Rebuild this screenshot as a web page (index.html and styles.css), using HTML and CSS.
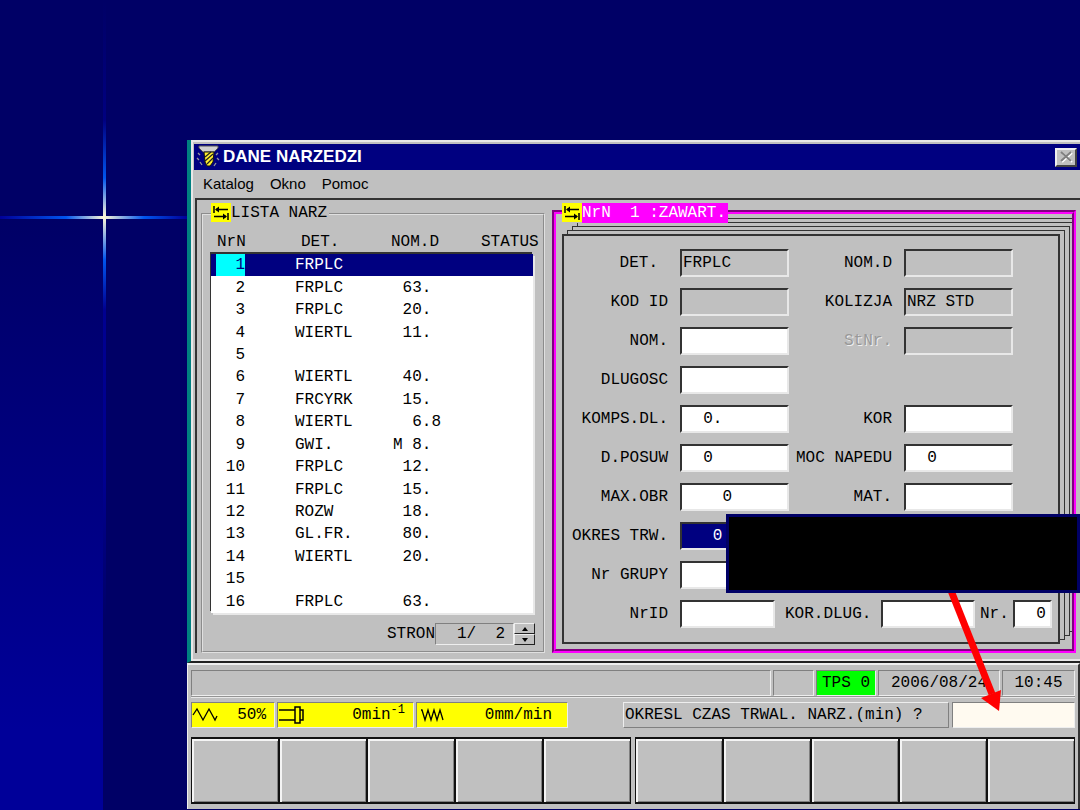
FILE: index.html
```html
<!DOCTYPE html>
<html lang="pl">
<head>
<meta charset="utf-8">
<title>DANE NARZEDZI</title>
<link rel="stylesheet" href="styles.css">
</head>
<body>
<div class="slide">
  <div class="ray ray-v"></div>
  <div class="ray ray-h"></div>

  <main class="screen">
    <section class="window">
      <header class="titlebar">
        <svg class="drill" viewBox="0 0 24 24" width="24" height="24" aria-hidden="true">
          <path d="M3 1h19v2l-4 4H7L3 3z" fill="#d0d0d0" stroke="#555" stroke-width="1"/>
          <path d="M8 7h10l-1 10-3 4h-3l-2-4z" fill="#ffee30" stroke="#111" stroke-width="1"/>
          <path d="M9 12l6-5M9 16l8-7M11 19l6-6" stroke="#222" stroke-width="1.2" fill="none"/>
          <path d="M2 8l2 2M1 13l2 2M4 17l2 3M22 8l-2 2M21 13l2 2M20 18l-2 3" stroke="#999" stroke-width="1.3"/>
        </svg>
        <h1>DANE NARZEDZI</h1>
        <button class="close" aria-label="Zamknij">
          <svg viewBox="0 0 14 14" width="14" height="14"><path d="M3 3l10 9M13 3L3 12" stroke="#fff" stroke-width="2"/><path d="M2 2l10 9M12 2L2 11" stroke="#808080" stroke-width="2"/></svg>
        </button>
      </header>
      <nav class="menu">
        <button>Katalog</button><button>Okno</button><button>Pomoc</button>
      </nav>

      <div class="work">
        <section class="group">
          <h2 class="legend"><svg class="tab" viewBox="0 0 20 19" width="20" height="19"><path d="M3 3v7M5 6.500h12M3 13.500h12M17 10v7" stroke="#000" stroke-width="1.5"/><path d="M4 6.500l4-3v6zM16 13.500l-4-3v6z"/></svg><span>LISTA NARZ</span></h2>
          <table class="tools">
            <thead><tr><th>NrN</th><th>DET.</th><th>NOM.D</th><th>STATUS</th></tr></thead>
            <tbody>
              <tr class="sel"><td><span>1</span></td><td>FRPLC</td><td></td><td></td></tr>
              <tr><td>2</td><td>FRPLC</td><td>63. </td><td></td></tr>
              <tr><td>3</td><td>FRPLC</td><td>20. </td><td></td></tr>
              <tr><td>4</td><td>WIERTL</td><td>11. </td><td></td></tr>
              <tr><td>5</td><td></td><td></td><td></td></tr>
              <tr><td>6</td><td>WIERTL</td><td>40. </td><td></td></tr>
              <tr><td>7</td><td>FRCYRK</td><td>15. </td><td></td></tr>
              <tr><td>8</td><td>WIERTL</td><td>6.8</td><td></td></tr>
              <tr><td>9</td><td>GWI.</td><td>M 8. </td><td></td></tr>
              <tr><td>10</td><td>FRPLC</td><td>12. </td><td></td></tr>
              <tr><td>11</td><td>FRPLC</td><td>15. </td><td></td></tr>
              <tr><td>12</td><td>ROZW</td><td>18. </td><td></td></tr>
              <tr><td>13</td><td>GL.FR.</td><td>80. </td><td></td></tr>
              <tr><td>14</td><td>WIERTL</td><td>20. </td><td></td></tr>
              <tr><td>15</td><td></td><td></td><td></td></tr>
              <tr><td>16</td><td>FRPLC</td><td>63. </td><td></td></tr>
            </tbody>
          </table>
          <div class="pager">
            <span>STRON</span><output class="page">1/  2</output>
            <div class="spin">
              <button aria-label="Poprzednia strona"><svg viewBox="0 0 8 4" width="8" height="4"><path d="M4 0l3 4H1z"/></svg></button>
              <button aria-label="Nastepna strona"><svg viewBox="0 0 8 4" width="8" height="4"><path d="M4 4l3-4H1z"/></svg></button>
            </div>
          </div>
        </section>

        <section class="detail">
          <h2 class="legend active"><svg class="tab" viewBox="0 0 20 19" width="20" height="19"><path d="M3 3v7M5 6.500h12M3 13.500h12M17 10v7" stroke="#000" stroke-width="1.5"/><path d="M4 6.500l4-3v6zM16 13.500l-4-3v6z"/></svg><span>NrN  1 :ZAWART.</span></h2>
          <div class="detail-in">
            <form class="sheet">
              <div class="fields">
                <label class="short" for="det">DET.</label><input id="det" class="ro" readonly value="FRPLC">
                <label for="nomd">NOM.D</label><input id="nomd" class="ro" readonly>
                <label for="kod">KOD ID</label><input id="kod" class="ro" readonly>
                <label for="kol">KOLIZJA</label><input id="kol" class="ro" readonly value="NRZ STD">
                <label for="nom">NOM.</label><input id="nom">
                <label class="off" for="stnr">StNr.</label><input id="stnr" class="ro" disabled>
                <label for="dl">DLUGOSC</label><input id="dl">
                <label class="first" for="komp">KOMPS.DL.</label><input id="komp" value="  0.">
                <label for="kor">KOR</label><input id="kor">
                <label for="pos">D.POSUW</label><input id="pos" value="  0">
                <label for="moc">MOC NAPEDU</label><input id="moc" value="  0">
                <label for="obr">MAX.OBR</label><input id="obr" value="    0">
                <label for="mat">MAT.</label><input id="mat">
                <label for="okr">OKRES TRW.</label><input id="okr" class="hot" value="   0">
                <label class="first" for="grp">Nr GRUPY</label><input id="grp">
              </div>
              <div class="last">
                <label for="nrid">NrID</label><input id="nrid">
                <label for="kdl">KOR.DLUG.</label><input id="kdl">
                <label for="nr">Nr.</label><input id="nr" value="  0">
              </div>
            </form>
          </div>
        </section>
      </div>
    </section>

    <section class="console">
      <div class="status">
        <span class="cell"></span><span class="cell"></span><span class="cell tps">TPS 0</span><span class="cell">2006/08/24</span><span class="cell">10:45</span>
      </div>
      <div class="readout">
        <span class="cell feed"><svg viewBox="0 0 26 16" width="26" height="16"><path d="M1 8l4-6 6 11 6-11 6 11 2-4" fill="none" stroke="#000" stroke-width="1.3"/></svg>50%</span>
        <span class="cell feed"><svg viewBox="0 0 26 20" width="26" height="20"><path d="M1 5h16M1 15h16M17 2h5v16h-5zM22 5h3v10h-3" fill="none" stroke="#000" stroke-width="1.5"/></svg><span>0min<sup>-1</sup></span></span>
        <span class="cell feed"><svg viewBox="0 0 24 16" width="24" height="16"><path d="M1 3h1l3 10 3-10 3 10 3-10 3 10 3-10 3 10" fill="none" stroke="#000" stroke-width="1.3"/></svg>0mm/min</span>
        <label class="prompt" for="ans">OKRESL CZAS TRWAL. NARZ.(min) ?</label>
        <input id="ans" class="answer">
      </div>
      <div class="keys">
        <div class="bank"><button aria-label="F1"></button><button aria-label="F2"></button><button aria-label="F3"></button><button aria-label="F4"></button><button aria-label="F5"></button></div>
        <div class="bank"><button aria-label="F6"></button><button aria-label="F7"></button><button aria-label="F8"></button><button aria-label="F9"></button><button aria-label="F10"></button></div>
      </div>
    </section>

    <svg class="arrow" viewBox="0 0 70 130" width="70" height="130" aria-hidden="true"><path d="M12 6L54 112" stroke="#f00" stroke-width="7"/><path d="M61 129L43 116L63 108z" fill="#f00"/></svg>
    <div class="callout"></div>
  </main>
</div>
</body>
</html>
```

FILE: styles.css
```css
* { box-sizing: border-box; }

body {
  margin: 0;
  font: 16px/20px "Liberation Mono", monospace;
  color: #000;
}

button, input {
  font: inherit;
  color: inherit;
  padding: 0;
  border-radius: 0;
}

h1, h2 { margin: 0; font-size: 16px; font-weight: 400; }

.slide {
  position: relative;
  min-height: 100vh;
  padding: 140px 0 0 187px;
  overflow: hidden;
  background: #000066 linear-gradient(180deg, #000066 0%, #000066 27%, #000099 90%) 0 0 / 104px 100% no-repeat;
}

/* Star-shaped light rays */
.ray { position: absolute; }
.ray-v {
  left: 103px; top: 0; bottom: 0; width: 3px;
  background: linear-gradient(180deg, #000066 0, #000080 120px, #0055ee 178px, #fff8d8 217px, #0055ee 260px, #000090 310px, #000090 480px, #000066 620px);
}
.ray-h {
  left: 0; top: 216px; width: 187px; height: 3px;
  background: linear-gradient(90deg, #000099 0, #0055ee 66px, #fff8d8 104px, #0055ee 144px, #000099 187px);
}

.screen { position: relative; }

.window {
  padding: 2px 0 8px 3px;
  background: #c0c0c0;
  border-left: 4px solid #008080;
  border-bottom: 2px solid #222;
  box-shadow: inset 2px 2px #e8e8e8, inset 0 -2px #e8e8e8;
}

.titlebar {
  display: flex;
  align-items: center;
  height: 26px;
  margin-top: 2px;
  padding: 0 3px 0 2px;
  background: #000080;
  color: #fff;
}
.titlebar h1 {
  flex: 1;
  padding-left: 3px;
  font: bold 17px/24px "Liberation Sans", sans-serif;
}
.close {
  display: grid;
  place-items: center;
  width: 22px;
  height: 19px;
  background: #c0c0c0;
  border: 2px solid;
  border-color: #eee #444 #444 #eee;
}

.menu {
  display: flex;
  gap: 16px;
  height: 28px;
  padding: 0 9px;
}
.menu button {
  border: 0;
  background: none;
  font: 15px/26px "Liberation Sans", sans-serif;
}

.work {
  display: flex;
  gap: 7px;
  margin-left: 1px;
  padding: 10px 4px 0;
  border-top: 2px solid #333;
  border-left: 2px solid #333;
}

.group {
  flex: 0 0 344px;
  margin-top: 3px;
  padding: 0 8px 6px;
  border: 2px groove #e0e0e0;
}

.legend {
  display: flex;
  width: max-content;
  height: 20px;
  background: #c0c0c0;
  white-space: pre;
}
.legend span { padding-right: 2px; }
.tab { background: #ff0; }
.group .legend { margin-top: -12px; }

.tools {
  width: calc(100% - 2px);
  height: 381px;
  margin-top: 9px;
  table-layout: fixed;
  border-spacing: 0;
  white-space: pre;
}
.tools th, .tools td { padding: 0; text-align: left; font-weight: 400; }
.tools th { height: 22px; padding-bottom: 2px; }
.tools th:nth-child(1) { width: 84px; padding-left: 6px; }
.tools th:nth-child(2) { width: 96px; padding-left: 6px; }
.tools th:nth-child(3) { width: 90px; }
.tools tbody { box-shadow: -1px -2px #333, 2px 2px #e8e8e8; }
.tools tbody td { background: #fff; line-height: 22px; }
.tools td:nth-child(1) { padding-right: 50px; text-align: right; }
.tools td:nth-child(3) { padding-right: 40px; text-align: right; }
.tools .sel td { background: #000080; color: #fff; }
.tools .sel span {
  display: block;
  margin-left: 5px;
  background: #0ff;
  color: #000080;
}

.pager {
  display: flex;
  justify-content: flex-end;
  align-items: center;
  margin-top: 10px;
}
.page {
  width: 79px;
  height: 22px;
  padding-right: 8px;
  text-align: right;
  white-space: pre;
  border: 1px solid;
  border-color: #808080 #eee #eee #808080;
}
.spin { display: grid; width: 21px; }
.spin button {
  display: grid;
  place-items: center;
  height: 11px;
  background: #c0c0c0;
  border: 1px solid;
  border-color: #eee #222 #222 #eee;
}

.detail {
  flex: 1;
  border: 2px solid;
  border-color: #800080 #f0f #f0f #800080;
}
.detail-in {
  height: 100%;
  overflow: hidden;
  padding: 20px 12px 5px 6px;
  border: 2px solid;
  border-color: #f0f #800080 #800080 #f0f;
}
.detail .legend { position: absolute; top: 63px; margin-left: 8px; }
.active span { background: #f0f; color: #fff; }

/* Stack of pages drawn behind the front sheet */
.sheet {
  height: 100%;
  padding: 13px 3px 12px;
  background: #c0c0c0;
  border: 2px solid #333;
  box-shadow:
    5px -4px 0 -1px #c0c0c0, 5px -4px #333,
    10px -8px 0 -1px #c0c0c0, 10px -8px #333,
    15px -12px 0 -1px #c0c0c0, 15px -12px #333,
    20px -16px 0 -1px #c0c0c0, 20px -16px #333;
}
.fields {
  display: grid;
  grid-template-columns: 113px 109px 115px 109px;
  row-gap: 12px;
}
.fields label, .last label { line-height: 29px; height: 27px; white-space: pre; }
.fields label { padding-right: 12px; text-align: right; }
.fields .first { grid-column: 1; }
.fields label.short { padding-right: 22px; }
.off { color: #999; text-shadow: 1px 1px #eee; }

.sheet input {
  min-width: 0;
  width: 100%;
  height: 28px;
  margin-bottom: -1px;
  padding: 0 2px;
  background: #fff;
  border: 2px solid;
  border-color: #333 #e8e8e8 #e8e8e8 #333;
  white-space: pre;
}
.sheet .ro { background: #c0c0c0; padding: 0 1px; }
.sheet .hot { background: #000080; color: #fff; }

.last {
  display: grid;
  grid-template-columns: 113px 95px 106px 94px 38px 39px;
  margin-top: 12px;
}
.last label { padding-left: 10px; }
.last label:nth-of-type(1) { padding-right: 12px; text-align: right; }
.last label:nth-of-type(3) { padding-left: 5px; }

.console {
  min-height: 146px;
  padding: 5px 3px 0 3px;
  background: #c0c0c0;
  border: 1px solid #eee;
  border-width: 2px 2px 0 1px;
  border-right-color: #333;
}
.cell {
  height: 26px;
  line-height: 24px;
  text-align: center;
  border: 1px solid;
  border-color: #808080 #eee #eee #808080;
}
.status {
  display: grid;
  grid-template-columns: 1fr 41px 60px 122px 73px;
  gap: 2px;
  border-bottom: 2px groove #e8e8e8;
}
.tps { background: #0f0; }

.readout {
  display: grid;
  grid-template-columns: 84px 137px 152px 1fr 123px;
  gap: 2px;
  padding-top: 4px;
}
.feed {
  display: flex;
  align-items: center;
  justify-content: space-between;
  padding-right: 8px;
  background: #ff0;
}
.feed sup { font-size: 12px; line-height: 0; vertical-align: 6px; }
.feed:nth-child(3) { padding-right: 15px; padding-left: 3px; }
.prompt {
  justify-self: end;
  width: 326px;
  margin-right: 1px;
  padding-left: 1px;
  line-height: 24px;
  white-space: nowrap;
  border: 1px solid;
  border-color: #eee #808080 #808080 #eee;
}
.answer {
  width: 100%;
  height: 26px;
  background: #fffaf0;
  border: 1px solid;
  border-color: #808080 #eee #eee #808080;
}

.keys {
  display: grid;
  grid-template-columns: 1fr 1fr;
  gap: 3px;
  margin-top: 9px;
}
.bank { display: grid; grid-template-columns: repeat(5, 1fr); }
.bank button {
  height: 67px;
  background: #c0c0c0;
  border: 1px solid #111;
  border-width: 2px 1px;
  box-shadow: inset 2px 2px #f4f4f4, inset -1px -1px #808080;
}

.callout {
  position: absolute;
  top: 374px;
  right: 0;
  width: 354px;
  height: 79px;
  background: #000;
  border: 3px solid #000066;
}
.arrow { position: absolute; top: 442px; right: 72px; }
```
